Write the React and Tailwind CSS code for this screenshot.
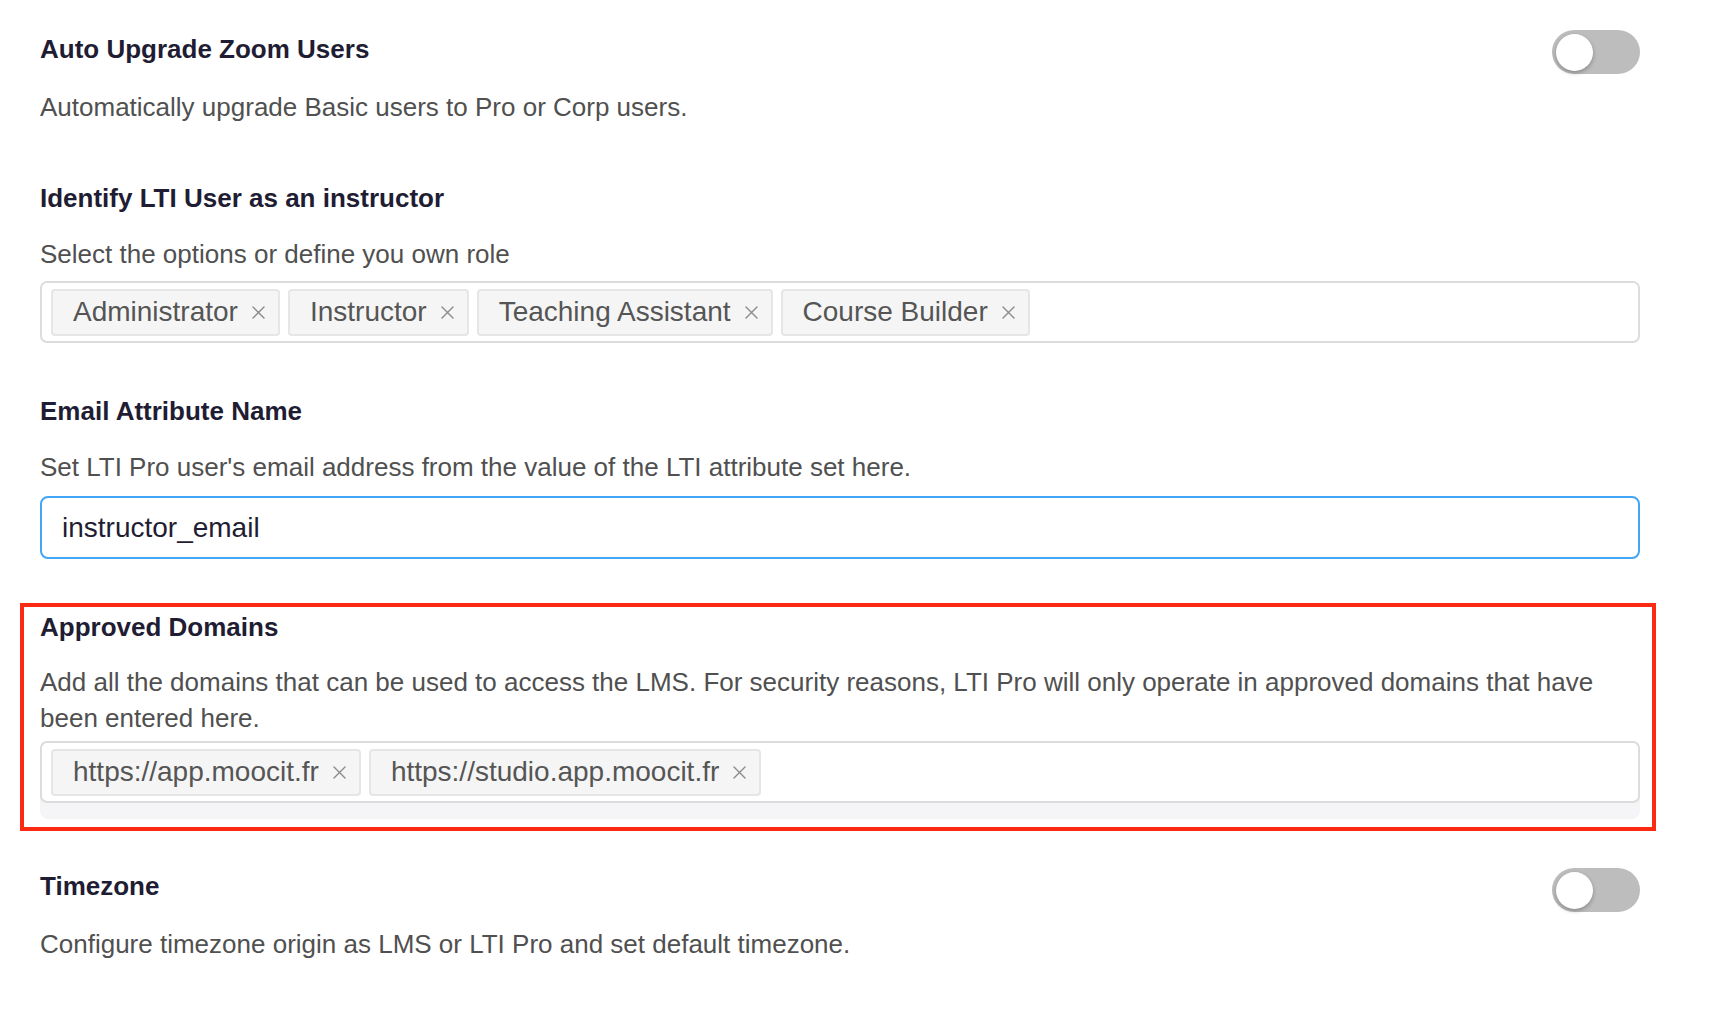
import React from "react";

const XIcon = () => (
  <svg width="13" height="13" viewBox="0 0 13 13" className="block">
    <path d="M1 1L12 12M12 1L1 12" stroke="#8a8a8a" strokeWidth="1.4" strokeLinecap="round" />
  </svg>
);

const Tag = ({ label }) => (
  <div className="flex h-[47px] items-center rounded-[4px] border-2 border-[#e6e6e6] bg-[#f5f5f5] pl-[20px] pr-[13px]">
    <span className="text-[28px] leading-none text-[#555555]">{label}</span>
    <span className="ml-[14px]">
      <XIcon />
    </span>
  </div>
);

const TagBox = ({ tags }) => (
  <div className="flex h-[62px] items-center gap-[8px] rounded-[7px] border-2 border-[#dcdcdc] bg-white pl-[9px]">
    {tags.map((t) => (
      <Tag key={t} label={t} />
    ))}
  </div>
);

const Toggle = () => (
  <div className="flex h-[44px] w-[88px] shrink-0 items-center rounded-full bg-[#bdbdbd] pl-[4px]">
    <div className="h-[37px] w-[37px] rounded-full bg-white shadow-[0_2px_4px_rgba(0,0,0,0.28)]" />
  </div>
);

const Title = ({ children, className = "" }) => (
  <div className={"text-[26px] font-bold leading-[32px] text-[#1f1d33] " + className}>{children}</div>
);

const Desc = ({ children, className = "" }) => (
  <div className={"text-[26px] leading-[36px] text-[#505050] " + className}>{children}</div>
);

export default function App() {
  return (
    <div className="min-h-[1010px] bg-white font-['Liberation_Sans',Arial,Helvetica,sans-serif]">
      <div className="w-[1600px] ml-[40px] pt-[30px]">
        {/* Auto Upgrade */}
        <div className="flex items-start justify-between">
          <Title className="mt-[3px]">Auto Upgrade Zoom Users</Title>
          <Toggle />
        </div>
        <Desc className="mt-[15px]">Automatically upgrade Basic users to Pro or Corp users.</Desc>

        {/* Identify LTI */}
        <Title className="mt-[57px]">Identify LTI User as an instructor</Title>
        <Desc className="mt-[22px]">Select the options or define you own role</Desc>
        <div className="mt-[9px]">
          <TagBox tags={["Administrator", "Instructor", "Teaching Assistant", "Course Builder"]} />
        </div>

        {/* Email attribute */}
        <Title className="mt-[52px]">Email Attribute Name</Title>
        <Desc className="mt-[22px]">Set LTI Pro user's email address from the value of the LTI attribute set here.</Desc>
        <div className="mt-[11px] flex h-[63px] items-center rounded-[8px] border-2 border-[#42a5f5] bg-white pl-[20px]">
          <span className="text-[28px] leading-none text-[#1f1d33]">instructor_email</span>
        </div>

        {/* Approved Domains (highlighted) */}
        <div className="mt-[44px] ml-[-20px] mr-[-16px] border-4 border-[#fb2a12] pl-[16px] pr-[12px] pt-[4px] pb-[8px]">
          <Title>Approved Domains</Title>
          <Desc className="mt-[21px]">
            Add all the domains that can be used to access the LMS. For security reasons, LTI Pro will only operate in
            approved domains that have been entered here.
          </Desc>
          <div className="mt-[5px] rounded-[8px] bg-[#f5f5f7] pb-[16px]">
            <TagBox tags={["https://app.moocit.fr", "https://studio.app.moocit.fr"]} />
          </div>
        </div>

        {/* Timezone */}
        <div className="mt-[37px] flex items-start justify-between">
          <Title className="mt-[2px]">Timezone</Title>
          <Toggle />
        </div>
        <Desc className="mt-[14px]">Configure timezone origin as LMS or LTI Pro and set default timezone.</Desc>
      </div>
    </div>
  );
}
